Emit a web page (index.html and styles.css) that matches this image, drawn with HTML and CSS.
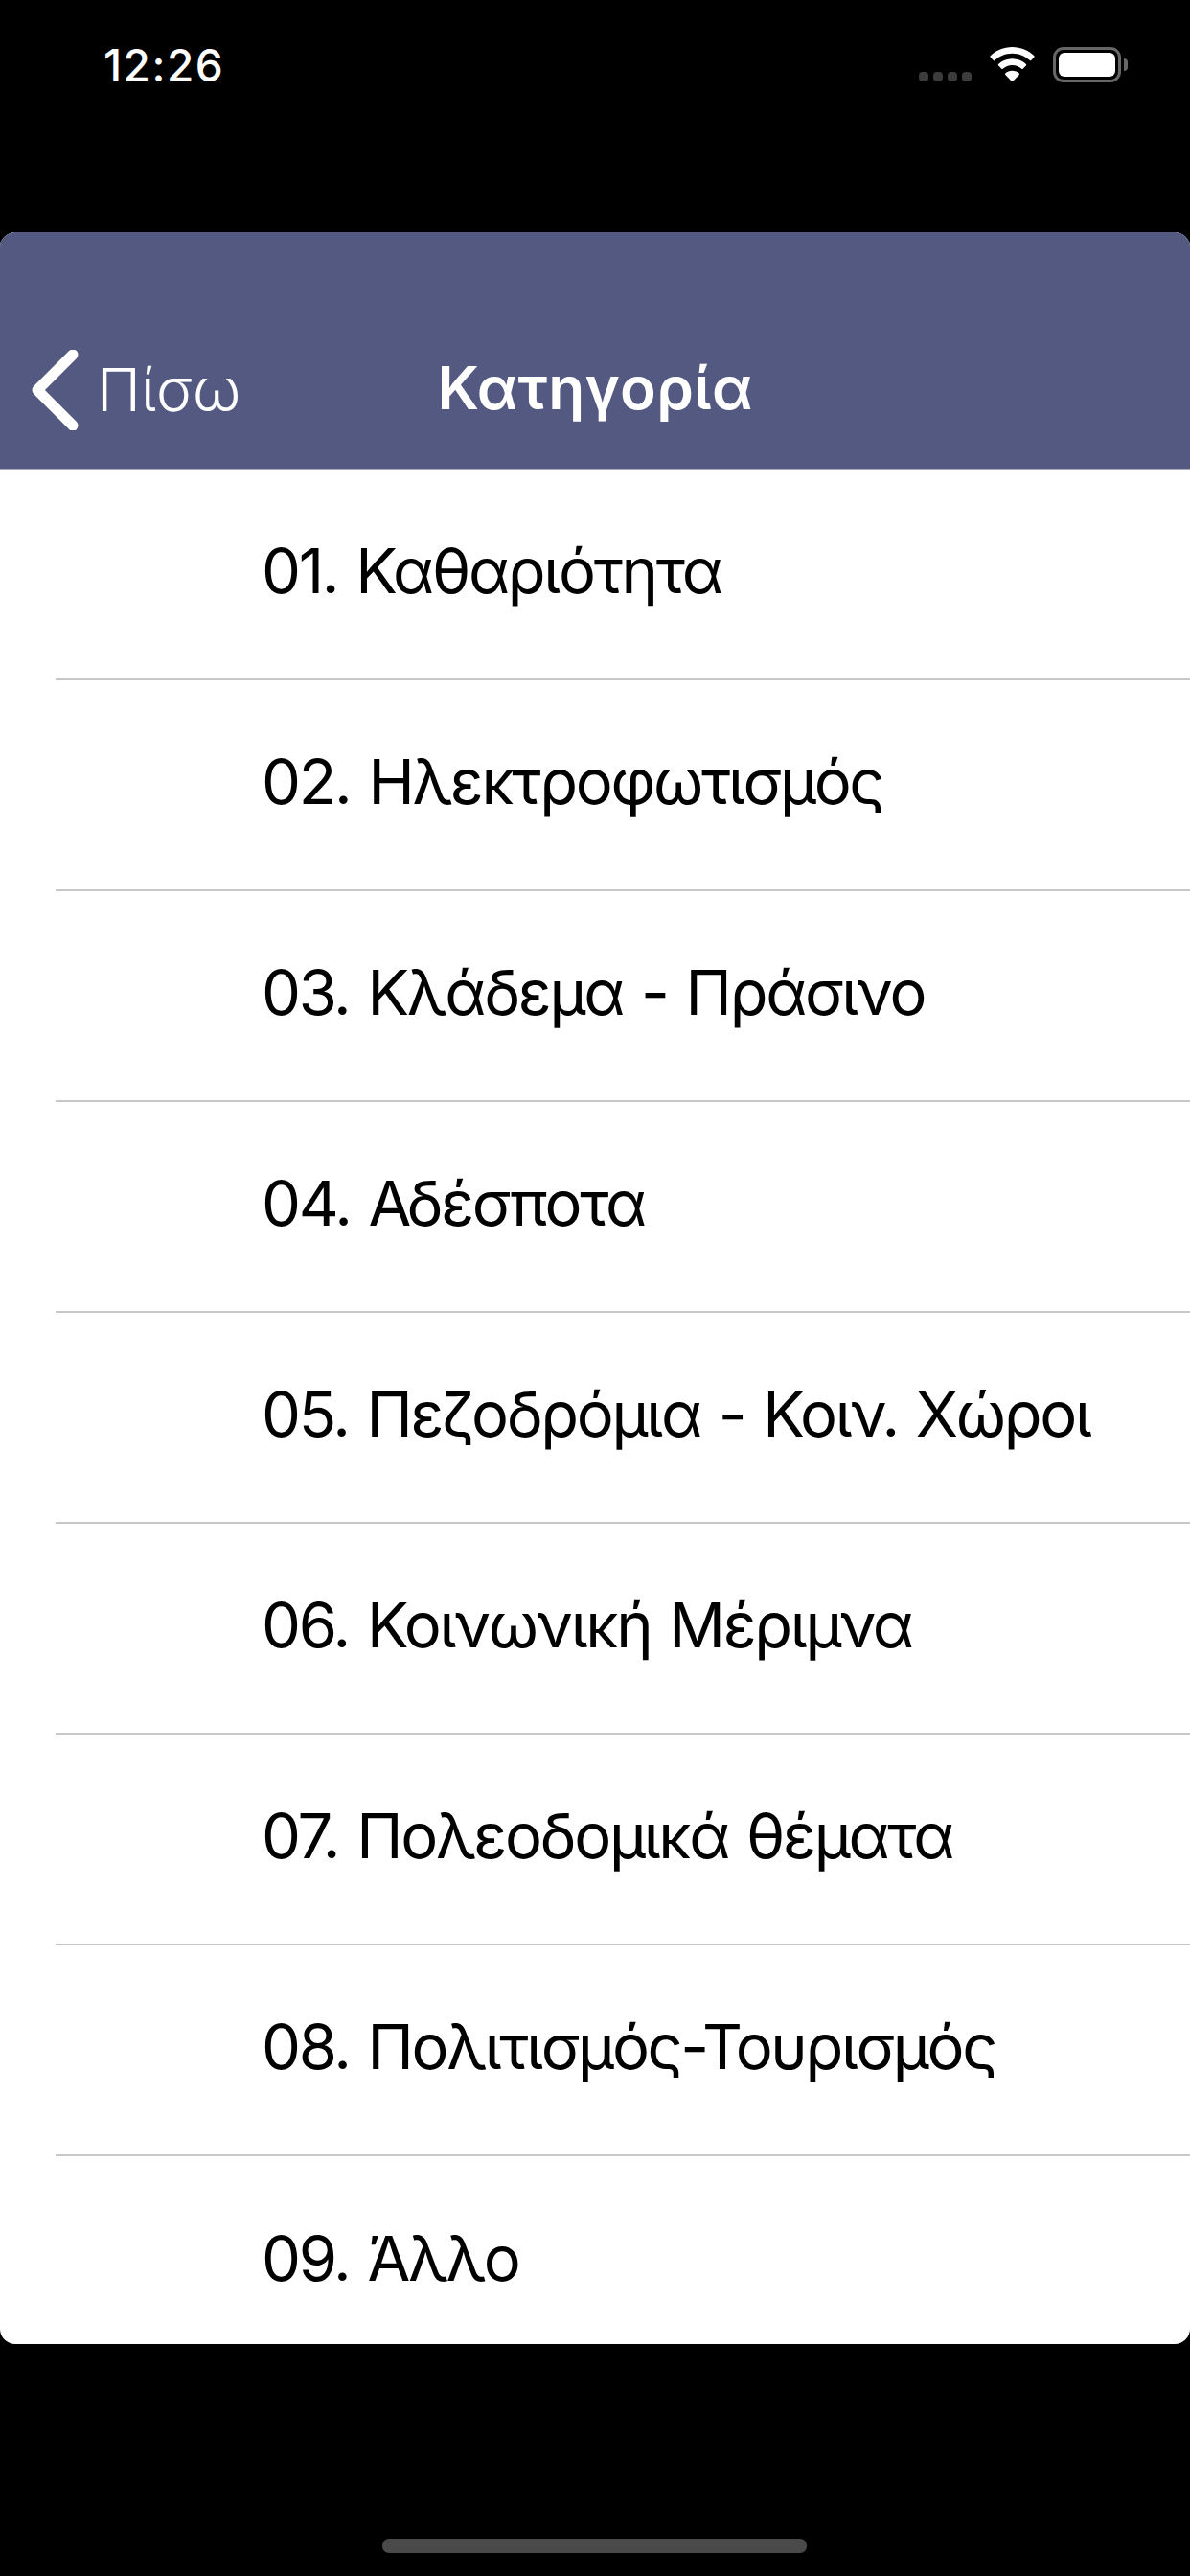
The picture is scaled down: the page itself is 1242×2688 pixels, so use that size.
FILE: index.html
```html
<!DOCTYPE html>
<html lang="el">
<head>
<meta charset="utf-8">
<title>Κατηγορία</title>
<link rel="stylesheet" href="styles.css">
</head>
<body>
<div class="screen">
  <header class="status">
    <span class="time">12:26</span>
    <div class="status-icons">
      <div class="signal"><i></i><i></i><i></i><i></i></div>
      <svg class="wifi" width="47" height="36" viewBox="0 0 47 36"><path fill="#fff" d="M23.5 0C14.6 0 6.6 3.5 0.6 9.2c-.4.4-.4 1 0 1.4l3.2 3.5c.4.4 1 .4 1.4 0C10 9.6 16.4 6.8 23.5 6.8s13.500 2.800 18.300 7.300c.4.400 1 .4 1.400 0l3.200-3.500c.4-.4.4-1 0-1.400C40.400 3.500 32.400 0 23.500 0Z"/><path fill="#fff" d="M23.500 12.200c-5.600 0-10.700 2.200-14.500 5.700-.4.400-.4 1 0 1.400l3.300 3.500c.4.400 1 .4 1.400 0 2.600-2.300 6-3.700 9.800-3.700s7.200 1.400 9.800 3.700c.4.400 1 .4 1.400 0l3.300-3.500c.4-.4.4-1 0-1.400-3.800-3.500-8.900-5.700-14.500-5.700Z"/><path fill="#fff" d="M23.500 24.800c-2.800 0-5.300 1-7.200 2.700-.4.400-.4 1 0 1.400l6.500 6.800c.4.400 1 .4 1.400 0l6.500-6.800c.4-.4.4-1 0-1.400-1.900-1.700-4.400-2.700-7.200-2.700Z"/></svg>
      <div class="battery"><div class="battery-body"><div class="battery-fill"></div></div><div class="battery-nub"></div></div>
    </div>
  </header>
  <main class="card">
    <nav class="navbar">
      <div class="back">
        <svg class="chevron" width="52" height="84" viewBox="0 0 52 84"><path d="M44 5 L7 42 L44 79" fill="none" stroke="#fff" stroke-width="11" stroke-linecap="round" stroke-linejoin="round"/></svg>
        <span class="back-label">Πίσω</span>
      </div>
      <h1 class="title">Κατηγορία</h1>
    </nav>
    <ul class="list">
      <li class="row"><span class="row-text">01. Καθαριότητα</span></li>
      <li class="row"><span class="row-text">02. Ηλεκτροφωτισμός</span></li>
      <li class="row"><span class="row-text">03. Κλάδεμα - Πράσινο</span></li>
      <li class="row"><span class="row-text">04. Αδέσποτα</span></li>
      <li class="row"><span class="row-text">05. Πεζοδρόμια - Κοιν. Χώροι</span></li>
      <li class="row"><span class="row-text">06. Κοινωνική Μέριμνα</span></li>
      <li class="row"><span class="row-text">07. Πολεοδομικά θέματα</span></li>
      <li class="row"><span class="row-text">08. Πολιτισμός-Τουρισμός</span></li>
      <li class="row last"><span class="row-text">09. Άλλο</span></li>
    </ul>
  </main>
  <div class="home-zone"><div class="home-indicator"></div></div>
</div>
</body>
</html>
```
FILE: styles.css
```css
* { box-sizing: border-box; margin: 0; padding: 0; }
html, body { background: #000; }
.screen {
  width: 1242px;
  height: 2688px;
  display: flex;
  flex-direction: column;
  background: #000;
  overflow: hidden;
  font-family: Inter, "Liberation Sans", Arial, sans-serif;
}
.status {
  height: 242px;
  flex: none;
  display: flex;
  justify-content: space-between;
  align-items: flex-start;
  padding: 41px 65px 0 108px;
}
.time {
  font-weight: 500;
  font-size: 46px;
  line-height: 54px;
  letter-spacing: 1.5px;
  color: #fff;
}
.status-icons {
  display: flex;
  align-items: flex-start;
  padding-top: 8px;
}
.signal {
  display: flex;
  gap: 5px;
  margin-top: 26px;
  margin-right: 19px;
}
.signal i {
  width: 10px;
  height: 10px;
  border-radius: 4px;
  background: #3c3c3c;
}
.wifi { display: block; margin-right: 19px; }
.battery { display: flex; align-items: center; }
.battery-body {
  width: 71px;
  height: 37px;
  border: 3px solid #676767;
  border-radius: 11px;
  padding: 3px;
}
.battery-fill {
  width: 100%;
  height: 100%;
  background: #fff;
  border-radius: 6px;
}
.battery-nub {
  width: 4px;
  height: 13px;
  margin-left: 3px;
  background: #676767;
  border-radius: 0 6px 6px 0;
}
.card {
  height: 2204px;
  flex: none;
  background: #fff;
  border-radius: 16px;
  overflow: hidden;
  display: flex;
  flex-direction: column;
}
.navbar {
  position: relative;
  height: 248px;
  flex: none;
  background: #535980;
  border-bottom: 1px solid #a9abbd;
  color: #fff;
}
.back {
  position: absolute;
  left: 32px;
  top: 123px;
  display: flex;
  align-items: center;
  gap: 17px;
}
.chevron { display: block; }
.back-label {
  font-weight: 350;
  font-size: 62px;
  line-height: 84px;
  color: #fff;
}
.title {
  position: absolute;
  left: 0;
  right: 0;
  top: 123px;
  text-align: center;
  font-weight: 600;
  font-size: 62px;
  line-height: 80px;
  letter-spacing: 0.3px;
  color: #fff;
}
.list { list-style: none; flex: 1; }
.row {
  height: 220px;
  margin-left: 58px;
  padding-left: 215px;
  padding-bottom: 6px;
  display: flex;
  align-items: center;
  border-bottom: 2px solid #c8c8c8;
}
.row.last { height: 197px; border-bottom: 0; padding-bottom: 0; padding-top: 16px; }
.row-text {
  font-size: 65px;
  line-height: 80px;
  letter-spacing: -2.3px;
  word-spacing: 3px;
  color: #000;
  white-space: nowrap;
}
.home-zone { flex: 1; position: relative; }
.home-indicator {
  position: absolute;
  left: 399px;
  top: 203px;
  width: 443px;
  height: 15px;
  border-radius: 7px;
  background: #4a4a4a;
}
```
